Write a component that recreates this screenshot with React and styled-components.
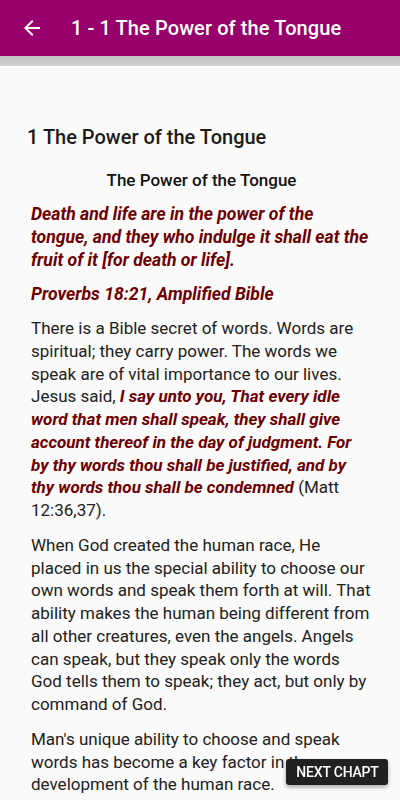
import React from "react";
import styled, { createGlobalStyle } from "styled-components";

const GlobalStyle = createGlobalStyle`
  body {
    margin: 0;
    background: #fafafa;
    font-family: Roboto, "Liberation Sans", sans-serif;
    color: #212121;
  }
`;

const AppBar = styled.header`
  height: 56px;
  background: #97006b;
  display: flex;
  align-items: center;
  padding: 0 16px 0 20px;
  color: #fff;
`;

const BackButton = styled.button`
  background: none;
  border: 0;
  padding: 0;
  width: 24px;
  height: 24px;
  display: flex;
  color: #fff;
  cursor: pointer;
`;

const Title = styled.h1`
  margin: 0 0 0 27px;
  font-size: 20px;
  font-weight: 500;
  letter-spacing: 0.1px;
`;

const Divider = styled.div`
  height: 10px;
  background: linear-gradient(#c2c2c2, #d2d2d2);
`;

const Page = styled.main`
  padding: 57px 28px 40px 31px;
`;

const ChapterHeading = styled.h2`
  margin: 0 0 18px -4px;
  font-size: 20px;
  font-weight: 500;
  line-height: 28px;
  color: #1b1b1b;
`;

const SectionHeading = styled.h3`
  margin: 0 0 12px;
  text-align: center;
  font-size: 17px;
  font-weight: 500;
  line-height: 22px;
  color: #111;
`;

const Para = styled.p`
  margin: 0 0 ${({ red }) => (red ? "11px" : "12px")};
  font-size: ${({ red }) => (red ? "17.6px" : "17px")};
  line-height: ${({ red }) => (red ? "23px" : "22.75px")};
  color: ${({ red }) => (red ? "#6c0000" : "#212121")};
  font-weight: ${({ red }) => (red ? 700 : 400)};
  font-style: ${({ red }) => (red ? "italic" : "normal")};
`;

const Quote = styled.span`
  color: #6c0000;
  font-weight: 700;
  font-style: italic;
`;

const NextButton = styled.button`
  position: fixed;
  right: 12px;
  bottom: 15px;
  height: 26px;
  width: 102px;
  padding: 0 0 0 1px;
  border: 0;
  border-radius: 3px;
  background: #212121;
  color: #fff;
  font-family: Roboto, "Liberation Sans", sans-serif;
  font-size: 14px;
  font-weight: 500;
  letter-spacing: -0.2px;
  text-transform: uppercase;
  white-space: nowrap;
  overflow: hidden;
  box-shadow: 0 2px 4px rgba(0, 0, 0, 0.35);
`;

const BackIcon = () => (
  <svg width="24" height="24" viewBox="0 0 24 24" fill="currentColor">
    <path d="M20 11H7.83l5.59-5.59L12 4l-8 8 8 8 1.41-1.41L7.83 13H20v-2z" />
  </svg>
);

const App = () => (
  <>
    <GlobalStyle />
    <AppBar>
      <BackButton aria-label="Back">
        <BackIcon />
      </BackButton>
      <Title>1 - 1 The Power of the Tongue</Title>
    </AppBar>
    <Divider />
    <Page>
      <ChapterHeading>1 The Power of the Tongue</ChapterHeading>
      <SectionHeading>The Power of the Tongue</SectionHeading>
      <Para red>
        Death and life are in the power of the tongue, and they who indulge it
        shall eat the fruit of it [for death or life].
      </Para>
      <Para red>Proverbs 18:21, Amplified Bible</Para>
      <Para>
        There is a Bible secret of words. Words are spiritual; they carry
        power. The words we speak are of vital importance to our lives. Jesus
        said,{" "}
        <Quote>
          I say unto you, That every idle word that men shall speak, they shall
          give account thereof in the day of judgment. For by thy words thou
          shall be justified, and by thy words thou shall be condemned
        </Quote>{" "}
        (Matt 12:36,37).
      </Para>
      <Para>
        When God created the human race, He placed in us the special ability to
        choose our own words and speak them forth at will. That ability makes
        the human being different from all other creatures, even the angels.
        Angels can speak, but they speak only the words God tells them to
        speak; they act, but only by command of God.
      </Para>
      <Para>
        Man's unique ability to choose and speak words has become a key factor
        in the development of the human race.
      </Para>
    </Page>
    <NextButton>Next Chapt</NextButton>
  </>
);

export default App;
